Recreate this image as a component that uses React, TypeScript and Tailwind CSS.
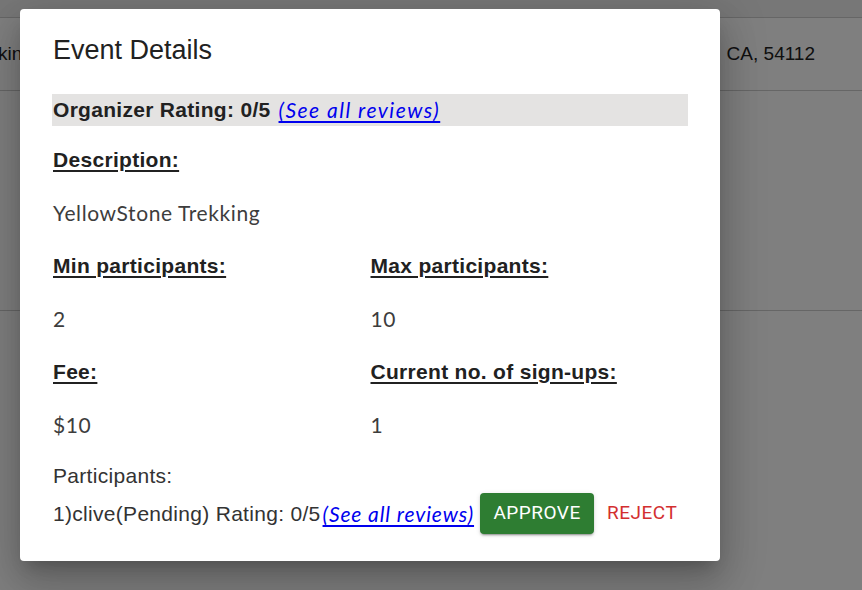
import React from 'react';

const Label = ({ children }: { children: React.ReactNode }) => (
    <div className="h-[53px] flex items-center">
        <span className="text-[21px] font-bold tracking-[0.3px] text-[#212121] underline decoration-[2px] underline-offset-[3px]">
            {children}
        </span>
    </div>
);

const Value = ({ children }: { children: React.ReactNode }) => (
    <div className="h-[53px] flex items-center">
        <span className="font-['Lato',sans-serif] text-[21px] tracking-[0.6px] text-[#3d3d3d]">{children}</span>
    </div>
);

const ReviewsLink = ({ className = '' }: { className?: string }) => (
    <a className={`font-['Lato',sans-serif] italic text-[21px] text-[#0000ee] underline decoration-[2px] underline-offset-[3px] cursor-pointer ${className}`}>
        (See all reviews)
    </a>
);

const BackgroundPage = () => (
    <div className="h-screen w-full bg-white font-['Liberation_Sans',Arial,sans-serif] text-[#212121]">
        <div className="h-[17px] bg-[#eeeeee]"></div>
        <div className="h-[74px] border-y border-[#cccccc] flex items-center justify-between pr-[47px]">
            <span className="text-[19px] -ml-[148px]">YellowStone Trekking</span>
            <span className="text-[19px]">CA, 54112</span>
        </div>
        <div className="h-[220px] border-b border-[#cccccc]"></div>
    </div>
);

const EventDialog = () => (
    <div className="w-[700px] h-[552px] bg-white rounded-[4px] shadow-[0_11px_15px_-7px_rgba(0,0,0,0.2),0_24px_38px_3px_rgba(0,0,0,0.14),0_9px_46px_8px_rgba(0,0,0,0.12)] px-[32px] pt-[25px] font-['Liberation_Sans',Arial,sans-serif]">
        {/* Title */}
        <h2 className="text-[27px] leading-[32px] text-[#212121] pl-[1px]">Event Details</h2>

        {/* Organizer rating */}
        <div className="mt-[28px] h-[32px] bg-[#e4e3e2] flex items-center pl-[1px]">
            <span className="text-[21px] font-bold tracking-[0.3px] text-[#212121]">Organizer Rating: 0/5</span>
            <ReviewsLink className="ml-[8px] tracking-[1.5px]" />
        </div>

        <div className="mt-[7px] pl-[1px]">
            <Label>Description:</Label>
            <Value>YellowStone Trekking</Value>

            <div className="grid grid-cols-2">
                <div>
                    <Label>Min participants:</Label>
                    <Value>2</Value>
                    <Label>Fee:</Label>
                    <Value>$10</Value>
                </div>
                <div>
                    <Label>Max participants:</Label>
                    <Value>10</Value>
                    <Label>Current no. of sign-ups:</Label>
                    <Value>1</Value>
                </div>
            </div>

            {/* Participants */}
            <div className="h-[42px] pt-[8px] flex items-center text-[21px] tracking-[0.3px] text-[#333333]">Participants:</div>
            <div className="h-[41px] flex items-center text-[21px] tracking-[0.3px] text-[#333333]">
                <span>1)clive(Pending) Rating: 0/5</span>
                <ReviewsLink className="ml-[2px] tracking-[0.9px]" />
                <button className="ml-[6px] h-[41px] w-[114px] rounded-[4px] bg-[#2e7d32] text-white font-['Roboto',sans-serif] text-[19px] tracking-[0.5px] shadow-[0_3px_1px_-2px_rgba(0,0,0,0.2),0_2px_2px_0_rgba(0,0,0,0.14),0_1px_5px_0_rgba(0,0,0,0.12)]">
                    APPROVE
                </button>
                <button className="ml-[5px] h-[41px] px-[8px] text-[#d32f2f] font-['Roboto',sans-serif] text-[19px] tracking-[0.5px]">
                    REJECT
                </button>
            </div>
        </div>
    </div>
);

export default function App() {
    return (
        <div className="relative h-screen w-full overflow-hidden">
            <BackgroundPage />
            <div className="absolute inset-0 bg-black/50 pl-[20px] pt-[9px]">
                <EventDialog />
            </div>
        </div>
    );
}
